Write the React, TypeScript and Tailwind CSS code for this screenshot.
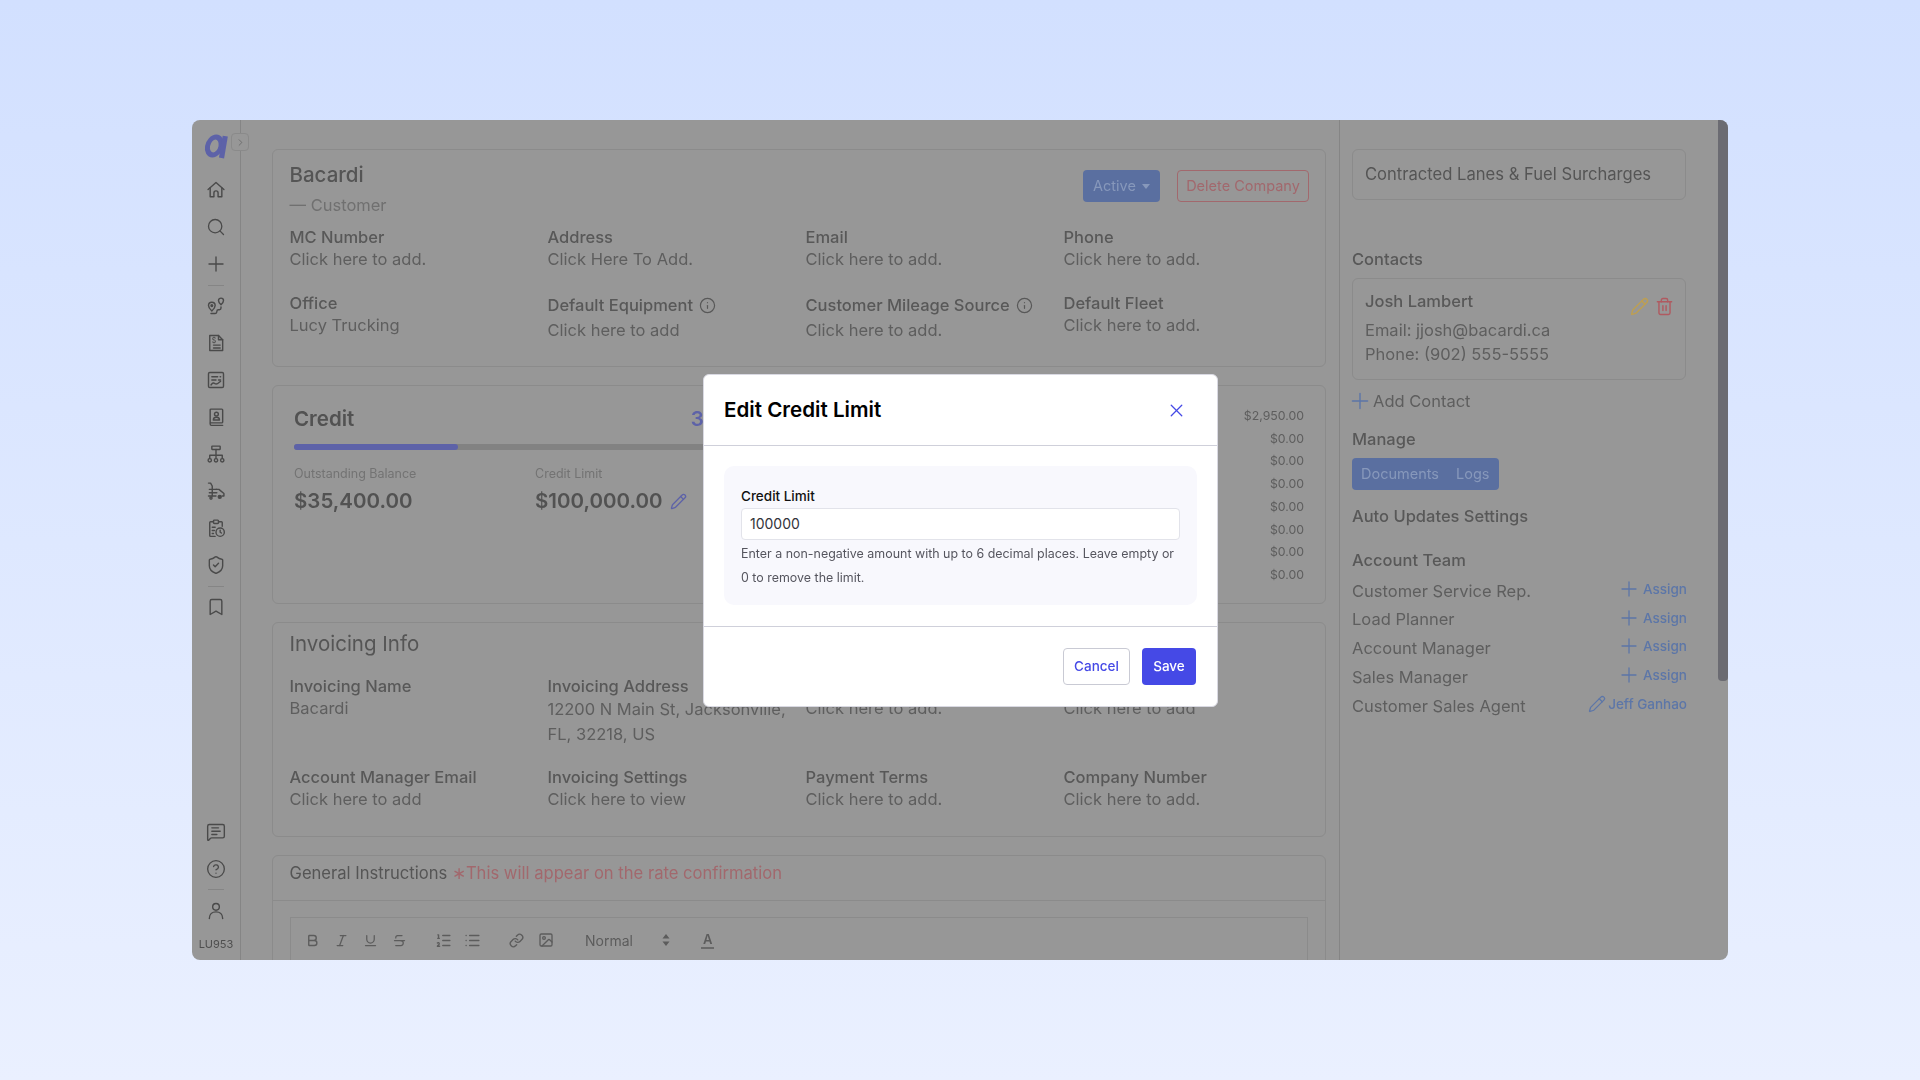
import {
  Bold,
  Bookmark,
  ChevronRight,
  CircleHelp,
  Image,
  Info,
  Italic,
  Link,
  List,
  ListOrdered,
  MessageSquareText,
  Pencil,
  Plus,
  Search,
  ShieldCheck,
  Strikethrough,
  Trash2,
  Underline,
  X,
} from "lucide-react";
import type { ReactNode } from "react";

function Glyph({ children }: { children: ReactNode }) {
  return (
    <svg width="20" height="20" viewBox="0 0 24 24" fill="none" stroke="currentColor" strokeWidth="1.7" strokeLinecap="round" strokeLinejoin="round">
      {children}
    </svg>
  );
}

function Logo() {
  return (
    <svg width="26" height="26" viewBox="0 0 25 24" fill="none" stroke="#5d62a8">
      <ellipse cx="11" cy="12" rx="6.5" ry="8.6" strokeWidth="4.8" transform="skewX(-10) translate(2 0)" />
      <path d="M21.4 2.500 17.800 23.500" strokeWidth="5" />
    </svg>
  );
}

function NavItem({ children }: { children: ReactNode }) {
  return <div className="h-[37px] flex items-center justify-center text-[#4a4a4a]">{children}</div>;
}

function Rule() {
  return <div className="w-[16px] h-px my-[2px] bg-[#858585]" />;
}

function Sidebar() {
  return (
    <div className="w-[49px] shrink-0 border-r border-[#858585] flex flex-col items-center relative">
      <div className="h-[51.5px] w-full pl-[11px] pt-[13px]">
        <Logo />
      </div>
      <div className="absolute left-[39px] top-[13px] w-[18px] h-[18px] rounded border border-[#8a8a8a] bg-[#979797] flex items-center justify-center text-[#6c6c6c]">
        <ChevronRight size={11} />
      </div>
      <NavItem>
        <Glyph>
          <path d="M2.500 11.500 12 3l9.500 8.500" />
          <path d="M5 9.500V20h4.500v-4.500a2.500 2.500 0 0 1 5 0V20H19V9.500" />
        </Glyph>
      </NavItem>
      <NavItem>
        <Search size={20} strokeWidth={1.6} />
      </NavItem>
      <NavItem>
        <Plus size={24} strokeWidth={1.4} />
      </NavItem>
      <Rule />
      <NavItem>
        <Glyph>
          <path d="M7 18s-4-3.500-4-6.500a4 4 0 0 1 8 0C11 14.500 7 18 7 18z" />
          <circle cx="7" cy="11.500" r="1" />
          <path d="M18 10.500s-3-2.600-3-5a3 3 0 0 1 6 0c0 2.400-3 5-3 5z" />
          <path d="M18 13v1.500a2 2 0 0 1-2 2h-1a2 2 0 0 0-2 2v.5a2 2 0 0 1-2 2H6" />
        </Glyph>
      </NavItem>
      <NavItem>
        <Glyph>
          <path d="M4.500 3H15l5 5v13H4.500z" />
          <path d="M15 3v5h5" />
          <text x="6.800" y="11.600" fontSize="8.500" fill="currentColor" stroke="none" fontFamily="Inter">$</text>
          <path d="M9 14.500h8M9 18h8" />
        </Glyph>
      </NavItem>
      <NavItem>
        <Glyph>
          <rect x="3" y="3" width="18" height="18" rx="1.500" />
          <path d="M7 8h7M17 8h.5M7 12h5M15 12h2.500" />
          <path d="M6 18c2-3 3-3 5-1.500s3 0 6.500-3" />
        </Glyph>
      </NavItem>
      <NavItem>
        <Glyph>
          <rect x="5" y="2.500" width="15" height="16.500" rx="1" />
          <path d="M5 19v1.500A1.500 1.500 0 0 0 6.500 22H20" />
          <circle cx="12.500" cy="8.500" r="2.300" />
          <path d="M8.800 15.500c0-2 1.600-3.200 3.700-3.200s3.700 1.200 3.700 3.200z" />
        </Glyph>
      </NavItem>
      <NavItem>
        <Glyph>
          <rect x="7" y="2.500" width="10" height="4" rx=".5" />
          <path d="M12 6.500V17M4.500 17v-3.500h15V17" />
          <circle cx="4.500" cy="19.500" r="2" />
          <circle cx="12" cy="19.500" r="2" />
          <circle cx="19.500" cy="19.500" r="2" />
        </Glyph>
      </NavItem>
      <NavItem>
        <Glyph>
          <path d="M3 2.500h2.500L7.500 6v12" />
          <path d="M3 18h9M4 10h9M4 14h9" />
          <path d="M12 10h3.500L21.500 15v3h-2" />
          <circle cx="6" cy="20.500" r="1.300" />
          <circle cx="16.500" cy="19" r="1.800" fill="currentColor" />
        </Glyph>
      </NavItem>
      <NavItem>
        <Glyph>
          <path d="M9 4.500H5.500a1 1 0 0 0-1 1V21a1 1 0 0 0 1 1H11" />
          <path d="M15 4.500h3.500a1 1 0 0 1 1 1V10" />
          <rect x="9" y="2.500" width="6" height="4" rx="1" />
          <circle cx="17" cy="17" r="5" />
          <path d="M17 14.500V17l1.500 1M7.500 11H11M7.500 15H10M7.500 18.500H9" />
        </Glyph>
      </NavItem>
      <NavItem>
        <ShieldCheck size={20} strokeWidth={1.7} />
      </NavItem>
      <Rule />
      <NavItem>
        <Bookmark size={20} strokeWidth={1.7} />
      </NavItem>
      <div className="mt-auto flex flex-col items-center">
        <NavItem>
          <MessageSquareText size={20} strokeWidth={1.7} />
        </NavItem>
        <NavItem>
          <CircleHelp size={20} strokeWidth={1.6} />
        </NavItem>
        <Rule />
        <NavItem>
          <Glyph>
            <circle cx="12" cy="7" r="4" />
            <path d="M4 21c0-5 3.500-8 8-8s8 3 8 8" />
          </Glyph>
        </NavItem>
        <div className="text-[11px] leading-[16px] mt-[7px] mb-[8px] text-[#4e4e4e]">LU953</div>
      </div>
    </div>
  );
}

function Field({ label, value, icon, shift }: { label: string; value: string; icon?: boolean; shift?: boolean }) {
  return (
    <div className={shift ? "pt-[2px]" : ""}>
      <div className="text-[16.5px] leading-[22px] font-medium text-[#585858] flex items-center gap-[6px]">
        {label}
        {icon && <Info size={17} strokeWidth={1.7} />}
      </div>
      <div className={`text-[16.5px] leading-[22px] text-[#5e5e5e] ${shift ? "mt-[3px]" : ""}`}>{value}</div>
    </div>
  );
}

function CompanyCard() {
  return (
    <div className="h-[218px] border border-[#8b8b8b] rounded-md pl-[16.5px] pt-[11px]">
      <div className="flex justify-between pr-[16px]">
        <div>
          <div className="text-[20.5px] leading-[28px] font-medium text-[#555555]">Bacardi</div>
          <div className="text-[16.5px] leading-[24px] mt-[4px] text-[#707070]">— Customer</div>
        </div>
        <div className="flex gap-[17px] mt-[9px] h-[32px]">
          <div className="w-[77px] rounded bg-[#5a6fa0] text-[#8798bb] text-[14.5px] flex items-center justify-center gap-[6px]">
            Active
            <svg width="8" height="5" viewBox="0 0 8 5" fill="currentColor"><path d="M0 0h8L4 5z" /></svg>
          </div>
          <div className="w-[132px] rounded border border-[#a2686d] text-[#a2686d] text-[14.5px] flex items-center justify-center">
            Delete Company
          </div>
        </div>
      </div>
      <div className="grid grid-cols-[repeat(4,258px)] gap-y-[22px] mt-[9px]">
        <Field label="MC Number" value="Click here to add." />
        <Field label="Address" value="Click Here To Add." />
        <Field label="Email" value="Click here to add." />
        <Field label="Phone" value="Click here to add." />
        <Field label="Office" value="Lucy Trucking" />
        <Field label="Default Equipment" value="Click here to add" icon shift />
        <Field label="Customer Mileage Source" value="Click here to add." icon shift />
        <Field label="Default Fleet" value="Click here to add." />
      </div>
    </div>
  );
}

const amounts = ["$2,950.00", "$0.00", "$0.00", "$0.00", "$0.00", "$0.00", "$0.00", "$0.00"];

function CreditCard() {
  return (
    <div className="h-[219px] mt-[18px] border border-[#8b8b8b] rounded-md px-[21px] pt-[19px] flex justify-between">
      <div className="w-[463px]">
        <div className="flex">
          <div className="w-[402px] text-[20.5px] leading-[28px] font-semibold text-[#525252]">Credit</div>
          <div className="whitespace-nowrap text-[20.5px] leading-[28px] font-semibold text-[#5d62a8]">35.4%</div>
        </div>
        <div className="h-[6px] mt-[11px] rounded-full bg-[#828282]">
          <div className="h-[6px] w-[164px] rounded-full bg-[#5d62a8]" />
        </div>
        <div className="flex mt-[16px]">
          <div className="w-[241px]">
            <div className="text-[12.5px] leading-[16px] text-[#737373]">Outstanding Balance</div>
            <div className="text-[20.5px] leading-[28px] mt-[5px] font-semibold text-[#525252]">$35,400.00</div>
          </div>
          <div>
            <div className="text-[12.5px] leading-[16px] text-[#737373]">Credit Limit</div>
            <div className="flex items-center gap-[8px] mt-[5px]">
              <div className="text-[20.5px] leading-[28px] font-semibold text-[#525252]">$100,000.00</div>
              <Pencil size={17} strokeWidth={1.8} className="text-[#5d62a8]" />
            </div>
          </div>
        </div>
      </div>
      <div className="flex flex-col items-end text-[12.3px] leading-[22.7px] text-[#5e5e5e]">
        {amounts.map((a, i) => (
          <div key={i}>{a}</div>
        ))}
      </div>
    </div>
  );
}

function InvoicingCard() {
  return (
    <div className="h-[215px] mt-[18px] border border-[#8b8b8b] rounded-md pl-[16.5px] pt-[7px]">
      <div className="text-[20.5px] leading-[28px] text-[#555555]">Invoicing Info</div>
      <div className="grid grid-cols-[repeat(4,258px)] gap-y-[19px] mt-[17px]">
        <Field label="Invoicing Name" value="Bacardi" />
        <div>
          <div className="text-[16.5px] leading-[22px] font-medium text-[#585858]">Invoicing Address</div>
          <div className="text-[16.5px] leading-[25px] text-[#5e5e5e] w-[245px]">12200 N Main St, Jacksonville, FL, 32218, US</div>
        </div>
        <Field label="Invoicing Email" value="Click here to add." />
        <Field label="Invoicing Phone" value="Click here to add" />
        <Field label="Account Manager Email" value="Click here to add" />
        <Field label="Invoicing Settings" value="Click here to view" />
        <Field label="Payment Terms" value="Click here to add." />
        <Field label="Company Number" value="Click here to add." />
      </div>
    </div>
  );
}

function ToolBtn({ children }: { children: ReactNode }) {
  return <div className="w-[29px] flex justify-center">{children}</div>;
}

function InstructionsCard() {
  return (
    <div className="h-[300px] mt-[18px] border border-[#8b8b8b] rounded-md">
      <div className="h-[45px] border-b border-[#8b8b8b] pl-[16.5px] pt-[5px] text-[16.6px] leading-[24px] text-[#555555]">
        General Instructions <span className="text-[#a2686d]">∗This will appear on the rate confirmation</span>
      </div>
      <div className="ml-[17px] mr-[17px] mt-[16px] h-[200px] border border-[#8b8b8b]">
        <div className="flex items-center h-[44px] pl-[7px] text-[#5c5c5c]">
          <ToolBtn><Bold size={15} strokeWidth={2.2} /></ToolBtn>
          <ToolBtn><Italic size={15} strokeWidth={2} /></ToolBtn>
          <ToolBtn><Underline size={15} strokeWidth={2} /></ToolBtn>
          <ToolBtn><Strikethrough size={15} strokeWidth={2} /></ToolBtn>
          <div className="w-[15px]" />
          <ToolBtn><ListOrdered size={17} strokeWidth={2} /></ToolBtn>
          <ToolBtn><List size={17} strokeWidth={2} /></ToolBtn>
          <div className="w-[15px]" />
          <ToolBtn><Link size={15} strokeWidth={2.2} /></ToolBtn>
          <ToolBtn><Image size={16} strokeWidth={2} /></ToolBtn>
          <div className="w-[25px]" />
          <div className="w-[85px] text-[14px] flex items-center justify-between">
            Normal
            <svg width="8" height="12" viewBox="0 0 8 12" fill="currentColor"><path d="M4 0l3.500 4.500h-7zM4 12l3.500-4.500h-7z" /></svg>
          </div>
          <div className="ml-[31px] text-[13px] leading-[15px] font-semibold border-b-2 border-[#6a6a6a] px-[2px]">A</div>
        </div>
      </div>
    </div>
  );
}

function TeamRow({ label, name }: { label: string; name?: string }) {
  return (
    <div className="h-[28.75px] flex items-center justify-between text-[16.5px] text-[#5e5e5e]">
      {label}
      <div className="flex items-center gap-[2px] text-[13.5px] font-medium text-[#5c76a8] -mt-[4px] -mr-px">
        {name ? <Pencil size={18} strokeWidth={1.7} /> : <Plus size={24} strokeWidth={1.3} />}
        {name ?? "Assign"}
      </div>
    </div>
  );
}

function RightColumn() {
  return (
    <div className="flex-1 pl-[12px] pr-[32px] pt-[29px]">
      <div className="h-[51px] border border-[#8b8b8b] rounded-md pl-[12px] flex items-center text-[16.6px] text-[#555555]">
        Contracted Lanes &amp; Fuel Surcharges
      </div>
      <div className="mt-[47px] text-[16.5px] leading-[24px] font-medium text-[#585858]">Contacts</div>
      <div className="h-[102px] mt-[7px] border border-[#8b8b8b] rounded-md pl-[12px] pr-[11px] pt-[10px] flex justify-between">
        <div className="text-[16.5px] leading-[24px] text-[#5e5e5e]">
          <div className="font-medium text-[#585858] mb-[5px]">Josh Lambert</div>
          <div>Email: jjosh@bacardi.ca</div>
          <div>Phone: (902) 555-5555</div>
        </div>
        <div className="flex items-center gap-[6px] h-[18px] mt-[8px]">
          <Pencil size={19} strokeWidth={1.8} className="text-[#bd9f52]" />
          <Trash2 size={19} strokeWidth={1.8} className="text-[#b05a60]" />
        </div>
      </div>
      <div className="mt-[8px] -ml-[5px] flex items-center text-[16.5px] leading-[24px] text-[#5e5e5e]">
        <Plus size={26} strokeWidth={1.3} className="text-[#5c76a8]" />
        Add Contact
      </div>
      <div className="mt-[13px] text-[16.5px] leading-[24px] font-medium text-[#585858]">Manage</div>
      <div className="mt-[7px] w-[147px] h-[32px] rounded bg-[#5a6fa0] text-[14.5px] text-[#8798bb] flex items-center pl-[9px] gap-[17px]">
        <span>Documents</span>
        <span>Logs</span>
      </div>
      <div className="mt-[14px] text-[16.5px] leading-[24px] font-medium text-[#585858]">Auto Updates Settings</div>
      <div className="mt-[20px] text-[16.5px] leading-[24px] font-medium text-[#585858]">Account Team</div>
      <div className="mt-[4.6px]">
        <TeamRow label="Customer Service Rep." />
        <TeamRow label="Load Planner" />
        <TeamRow label="Account Manager" />
        <TeamRow label="Sales Manager" />
        <TeamRow label="Customer Sales Agent" name="Jeff Ganhao" />
      </div>
    </div>
  );
}

function EditModal() {
  return (
    <div className="w-[515px] h-[333px] ml-px mt-px bg-white rounded-md border border-[#d9d9e2] flex flex-col">
      <div className="h-[71px] border-b border-[#cfd0da] flex items-center justify-between pl-[20px] pr-[31px]">
        <div className="text-[20.6px] font-semibold text-black">Edit Credit Limit</div>
        <X size={21} strokeWidth={1.5} className="text-[#4549e6] -mr-[1px] mt-[1px]" />
      </div>
      <div className="h-[181px] border-b border-[#cfd0da] px-[20px] pt-[20px]">
        <div className="h-[139px] bg-[#f8f8fd] rounded-[10px] px-[17px] pt-[20px]">
          <div className="text-[13.5px] leading-[20px] font-medium text-[#111111]">Credit Limit</div>
          <input
            readOnly
            value="100000"
            className="w-[439px] h-[32px] mt-[2px] px-[8px] pb-[2px] text-[14px] text-[#33333a] bg-white border border-[#e2e3ea] rounded outline-none"
          />
          <div className="text-[12.45px] leading-[24.5px] mt-[1.5px] text-[#55555e]">
            Enter a non-negative amount with up to 6 decimal places. Leave empty or 0 to remove the limit.
          </div>
        </div>
      </div>
      <div className="flex-1 flex justify-end items-start gap-[12px] pl-[20px] pr-[21px] pt-[21px]">
        <div className="w-[67px] h-[37px] rounded border border-[#c9cad4] bg-white text-[13.5px] font-medium text-[#4549e6] flex items-center justify-center">
          Cancel
        </div>
        <div className="w-[54px] h-[37px] rounded bg-[#4549e6] text-[13.5px] font-medium text-white flex items-center justify-center">
          Save
        </div>
      </div>
    </div>
  );
}

export default function App() {
  return (
    <div className="h-screen bg-linear-to-b from-[#d2e0ff] to-[#eaf0ff] flex items-center justify-center font-['Inter',sans-serif]">
      <div className="relative w-[1536px] h-[840px] rounded-lg overflow-hidden bg-[#979797] flex blur-[0.4px]">
        <Sidebar />
        <div className="w-[1099px] shrink-0 border-r border-[#858585] pl-[31px] pr-[13px] pt-[29px] overflow-hidden">
          <CompanyCard />
          <CreditCard />
          <InvoicingCard />
          <InstructionsCard />
        </div>
        <RightColumn />
        <div className="w-[10px] h-[561px] shrink-0 rounded-b-sm bg-[#6b6b72]" />
        <div className="absolute inset-0 flex items-center justify-center">
          <EditModal />
        </div>
      </div>
    </div>
  );
}
